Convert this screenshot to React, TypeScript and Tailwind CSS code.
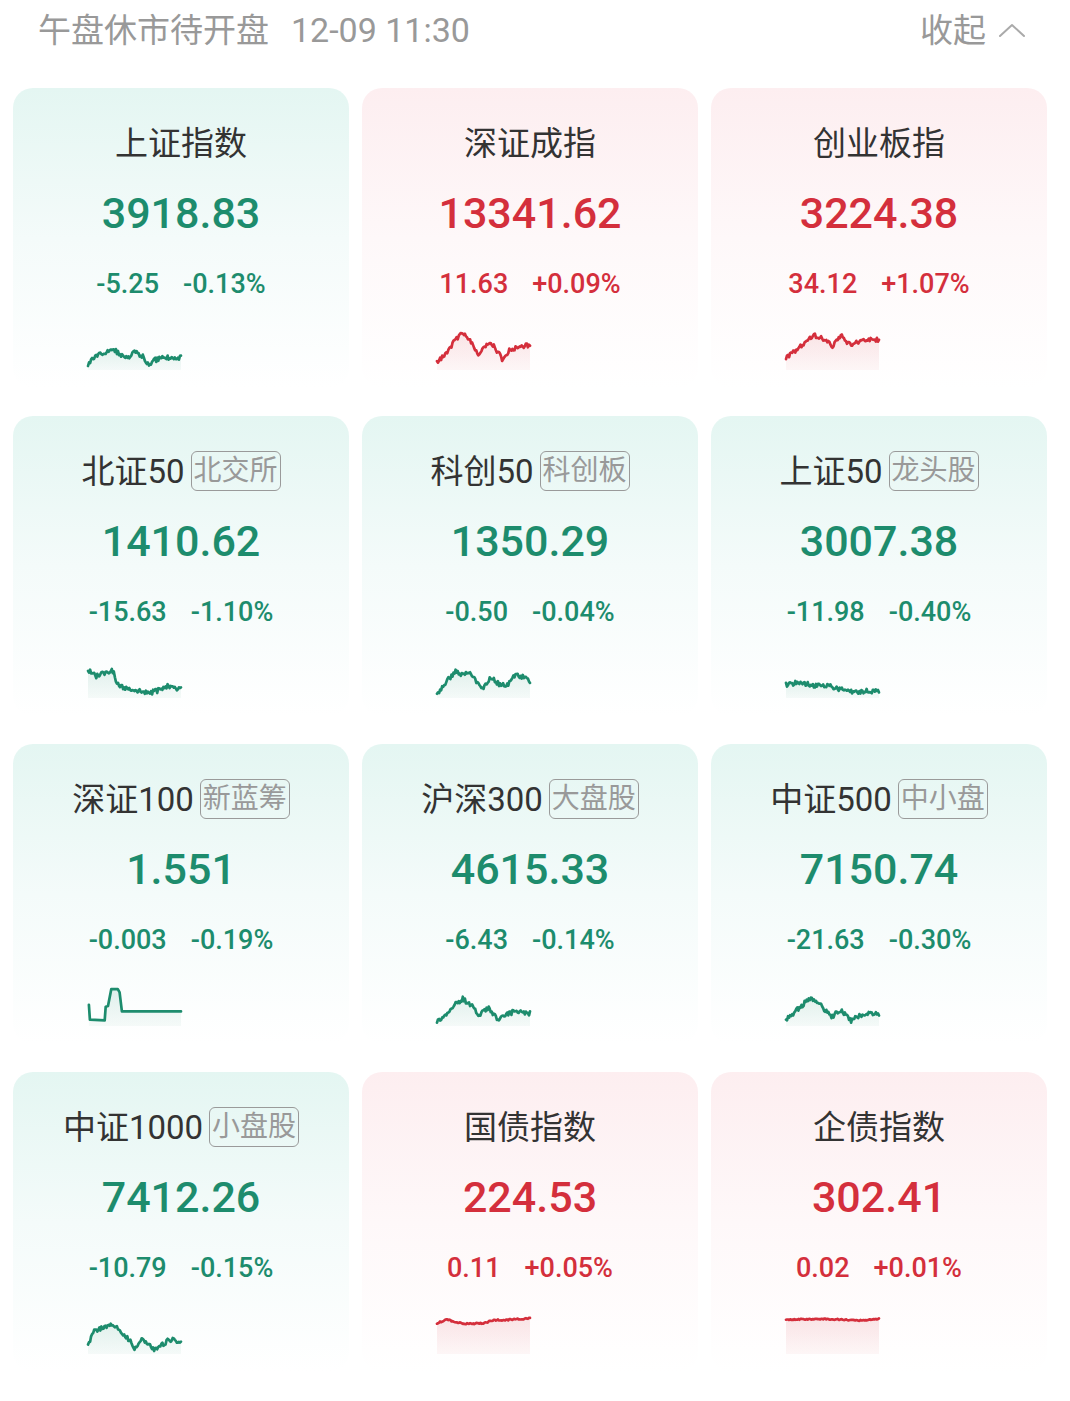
import React from 'react';

const GREEN = '#1d8c6d';
const RED = '#d42f3c';

interface IndexItem {
  name: string;
  tag?: string;
  value: string;
  change: string;
  pct: string;
  up: boolean;
  shape: number[][];
  raw?: boolean;
  noise?: number;
}

const items: IndexItem[] = [
  { name: '上证指数', value: '3918.83', change: '-5.25', pct: '-0.13%', up: false,
    shape: [[0, 0.95], [0.05, 0.7], [0.15, 0.6], [0.28, 0.5], [0.35, 0.62], [0.42, 0.75], [0.5, 0.55], [0.58, 0.65], [0.65, 0.88], [0.72, 0.78], [0.8, 0.7], [1, 0.72]] },
  { name: '深证成指', value: '13341.62', change: '11.63', pct: '+0.09%', up: true,
    shape: [[0, 0.85], [0.1, 0.6], [0.2, 0.2], [0.27, 0.02], [0.35, 0.2], [0.45, 0.65], [0.55, 0.3], [0.62, 0.4], [0.7, 0.75], [0.78, 0.5], [0.88, 0.4], [1, 0.35]] },
  { name: '创业板指', value: '3224.38', change: '34.12', pct: '+1.07%', up: true,
    shape: [[0, 0.7], [0.1, 0.55], [0.2, 0.3], [0.3, 0.08], [0.4, 0.2], [0.5, 0.38], [0.6, 0.12], [0.7, 0.38], [0.8, 0.25], [0.9, 0.2], [1, 0.22]] },
  { name: '北证50', tag: '北交所', value: '1410.62', change: '-15.63', pct: '-1.10%', up: false,
    shape: [[0, 0.28], [0.08, 0.45], [0.18, 0.35], [0.27, 0.3], [0.3, 0.6], [0.36, 0.75], [0.5, 0.82], [0.65, 0.92], [0.75, 0.85], [0.85, 0.72], [0.92, 0.8], [1, 0.8]] },
  { name: '科创50', tag: '科创板', value: '1350.29', change: '-0.50', pct: '-0.04%', up: false,
    shape: [[0, 0.95], [0.1, 0.6], [0.2, 0.3], [0.28, 0.42], [0.35, 0.3], [0.42, 0.62], [0.5, 0.78], [0.58, 0.45], [0.65, 0.65], [0.75, 0.72], [0.85, 0.4], [0.95, 0.5], [1, 0.58]] },
  { name: '上证50', tag: '龙头股', value: '3007.38', change: '-11.98', pct: '-0.40%', up: false,
    shape: [[0, 0.68], [0.15, 0.62], [0.3, 0.72], [0.45, 0.72], [0.6, 0.82], [0.75, 0.9], [0.85, 0.86], [1, 0.88]] },
  { name: '深证100', tag: '新蓝筹', value: '1.551', change: '-0.003', pct: '-0.19%', up: false, raw: true,
    shape: [[0.01, 0.47], [0.02, 0.88], [0.18, 0.9], [0.19, 0.52], [0.215, 0.5], [0.25, 0.03], [0.32, 0.03], [0.34, 0.12], [0.365, 0.65], [1, 0.65]] },
  { name: '沪深300', tag: '大盘股', value: '4615.33', change: '-6.43', pct: '-0.14%', up: false,
    shape: [[0, 0.95], [0.1, 0.7], [0.2, 0.45], [0.28, 0.3], [0.38, 0.5], [0.45, 0.75], [0.55, 0.55], [0.65, 0.88], [0.75, 0.72], [0.85, 0.65], [1, 0.7]] },
  { name: '中证500', tag: '中小盘', value: '7150.74', change: '-21.63', pct: '-0.30%', up: false,
    shape: [[0, 0.9], [0.1, 0.65], [0.2, 0.42], [0.28, 0.3], [0.4, 0.55], [0.5, 0.8], [0.58, 0.6], [0.7, 0.92], [0.8, 0.75], [0.9, 0.7], [1, 0.72]] },
  { name: '中证1000', tag: '小盘股', value: '7412.26', change: '-10.79', pct: '-0.15%', up: false,
    shape: [[0, 0.85], [0.05, 0.45], [0.12, 0.35], [0.22, 0.25], [0.3, 0.3], [0.38, 0.5], [0.45, 0.7], [0.5, 0.88], [0.58, 0.65], [0.65, 0.75], [0.72, 0.95], [0.8, 0.8], [0.88, 0.65], [1, 0.7]] },
  { name: '国债指数', value: '224.53', change: '0.11', pct: '+0.05%', up: true, noise: 0.04,
    shape: [[0, 0.2], [0.1, 0.1], [0.3, 0.22], [0.5, 0.2], [0.6, 0.12], [0.8, 0.1], [1, 0.06]] },
  { name: '企债指数', value: '302.41', change: '0.02', pct: '+0.01%', up: true, noise: 0.03,
    shape: [[0, 0.1], [0.4, 0.08], [0.6, 0.1], [0.8, 0.12], [1, 0.08]] },
];

const W = 93;
const H = 40;

function buildPoints(item: IndexItem, seed: number): number[][] {
  const map = (p: number[]) => [p[0] * W, 2 + p[1] * (H - 4)];
  if (item.raw) return item.shape.map(map);
  let s = seed * 7919 + 13;
  const rand = () => {
    s = (s * 9301 + 49297) % 233280;
    return s / 233280;
  };
  const amp = item.noise ?? 0.13;
  const keys = item.shape;
  const pts: number[][] = [];
  const N = 90;
  for (let i = 0; i <= N; i++) {
    const t = i / N;
    let k = 0;
    while (k < keys.length - 2 && keys[k + 1][0] < t) k++;
    const a = keys[k];
    const b = keys[k + 1];
    const f = b[0] === a[0] ? 0 : (t - a[0]) / (b[0] - a[0]);
    let y = a[1] + (b[1] - a[1]) * f;
    y += (rand() - 0.5) * amp;
    y = Math.max(0, Math.min(1, y));
    pts.push(map([t, y]));
  }
  return pts;
}

const Sparkline: React.FC<{ item: IndexItem; idx: number }> = ({ item, idx }) => {
  const color = item.up ? RED : GREEN;
  const pts = buildPoints(item, idx + 1);
  const line = pts.map((p, i) => `${i === 0 ? 'M' : 'L'}${p[0].toFixed(1)} ${p[1].toFixed(1)}`).join(' ');
  const first = pts[0];
  const last = pts[pts.length - 1];
  const area = `${line} L${last[0].toFixed(1)} ${H} L${first[0].toFixed(1)} ${H} Z`;
  const gid = `spark-fill-${idx}`;
  return (
    <svg width={W} height={H} viewBox={`0 0 ${W} ${H}`} className="block overflow-visible">
      <defs>
        <linearGradient id={gid} x1="0" y1="0" x2="0" y2="1">
          <stop offset="0%" stopColor={color} stopOpacity={0.12} />
          <stop offset="100%" stopColor={color} stopOpacity={0.04} />
        </linearGradient>
      </defs>
      <path d={area} fill={`url(#${gid})`} />
      <path d={line} fill="none" stroke={color} strokeWidth={2.7} strokeLinejoin="round" strokeLinecap="round" />
    </svg>
  );
};

const Card: React.FC<{ item: IndexItem; idx: number }> = ({ item, idx }) => {
  const textColor = item.up ? 'text-[#d42f3c]' : 'text-[#1d8c6d]';
  const bg = item.up
    ? 'bg-linear-to-b from-[#fdeef0] via-[#fef8f9] to-[#ffffff]'
    : 'bg-linear-to-b from-[#e4f6f2] via-[#f4fbfa] to-[#ffffff]';
  return (
    <div className={`h-[300px] rounded-[20px] ${bg} pt-[35px] flex flex-col`}>
      <div className="h-[40px] flex items-center justify-center text-[33px] text-[#333333] leading-none">
        <span>{item.name}</span>
        {item.tag && (
          <span className="ml-[6px] h-[40px] px-[2px] flex items-center border-[1.5px] border-[#9a9a9a] rounded-[6px] text-[28px] text-[#999999]">
            {item.tag}
          </span>
        )}
      </div>
      <div className={`mt-[25px] h-[50px] flex items-center justify-center text-[43px] font-medium leading-none ${textColor}`}>
        {item.value}
      </div>
      <div className={`mt-[30px] h-[32px] flex items-center justify-center gap-[24px] text-[27px] font-medium leading-none ${textColor}`}>
        <span>{item.change}</span>
        <span>{item.pct}</span>
      </div>
      <div className="mt-[30px] ml-[75px] w-[93px] h-[40px]">
        <Sparkline item={item} idx={idx} />
      </div>
    </div>
  );
};

export default function App() {
  return (
    <div className="w-[1070px] min-h-[1401px] bg-white font-['Roboto','Noto_Sans_CJK_SC',sans-serif]">
      <header className="h-[60px] pl-[38px] pr-[44px] flex items-center justify-between text-[33px] text-[#999999] leading-none">
        <div className="flex items-center">
          <span>午盘休市待开盘</span>
          <span className="ml-[22px] text-[34px]">12-09 11:30</span>
        </div>
        <div className="flex items-center">
          <span>收起</span>
          <svg width="28" height="16" viewBox="0 0 28 16" className="ml-[12px]">
            <path d="M2 14 L14 3 L26 14" fill="none" stroke="#aaaaaa" strokeWidth="2" strokeLinecap="round" strokeLinejoin="round" />
          </svg>
        </div>
      </header>
      <main className="pt-[28px] pl-[13px] grid grid-cols-[336px_336px_336px] gap-x-[13px] gap-y-[28px]">
        {items.map((item, i) => (
          <Card key={item.name} item={item} idx={i} />
        ))}
      </main>
    </div>
  );
}
